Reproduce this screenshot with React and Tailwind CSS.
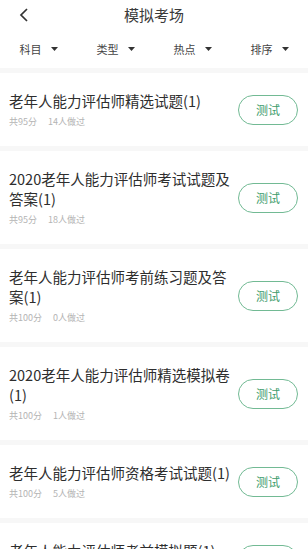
import React from "react";

const filters = ["科目", "类型", "热点", "排序"];

const papers = [
  { lines: ["老年人能力评估师精选试题(1)"], score: 95, done: 14 },
  { lines: ["2020老年人能力评估师考试试题及", "答案(1)"], score: 95, done: 18 },
  { lines: ["老年人能力评估师考前练习题及答", "案(1)"], score: 100, done: 0 },
  { lines: ["2020老年人能力评估师精选模拟卷", "(1)"], score: 100, done: 1 },
  { lines: ["老年人能力评估师资格考试试题(1)"], score: 100, done: 5 },
  { lines: ["老年人能力评估师考前模拟题(1)"], score: 100, done: 3 },
];

function Caret() {
  return (
    <svg width="7" height="4" viewBox="0 0 7 4" className="ml-[9px]">
      <path d="M0 0 L7 0 L3.5 4 Z" fill="#333" />
    </svg>
  );
}

function App() {
  return (
    <div
      className="w-[308px] h-[549px] overflow-hidden bg-white"
      style={{ fontFamily: '"Noto Sans CJK SC", "Noto Sans", sans-serif' }}
    >
      <div className="relative h-[30px] flex items-center justify-center">
        <svg
          width="10"
          height="14"
          viewBox="0 0 10 14"
          className="absolute left-[19px] top-[8px]"
        >
          <path d="M8 1 L2 7 L8 13" fill="none" stroke="#333" strokeWidth="1.7" />
        </svg>
        <span className="text-[15px] text-[#3a3a3a]">模拟考场</span>
      </div>

      <div className="h-[38px] grid grid-cols-4 items-center">
        {filters.map((f) => (
          <div key={f} className="flex items-center justify-center">
            <span className="text-[11px] text-[#444]">{f}</span>
            <Caret />
          </div>
        ))}
      </div>

      {papers.map((p, i) => (
        <div key={i}>
          <div className="h-[5px] bg-[#f7f7f7]" />
          <div className="flex items-center pl-[9px] pr-[10px] py-[18px]">
            <div className="flex-1">
              {p.lines.map((l) => (
                <div
                  key={l}
                  className="text-[14.5px] leading-[20px] text-[#2e2e2e] whitespace-nowrap"
                >
                  {l}
                </div>
              ))}
              <div className="mt-[5px] flex text-[9px] leading-[12px] text-[#b4b4b4]">
                <span>共{p.score}分</span>
                <span className="ml-[11px]">{p.done}人做过</span>
              </div>
            </div>
            <button className="w-[60px] h-[30px] rounded-full border border-[#72ba94] text-[12px] text-[#3d9c6c]">
              测试
            </button>
          </div>
        </div>
      ))}
    </div>
  );
}

export default App;
